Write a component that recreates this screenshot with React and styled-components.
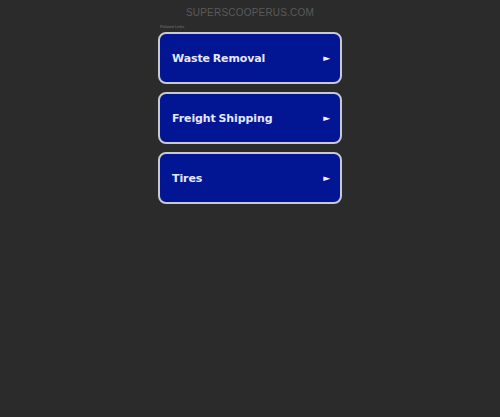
import React from 'react';
import styled, { createGlobalStyle } from 'styled-components';

const GlobalStyle = createGlobalStyle`
  html, body {
    margin: 0;
    padding: 0;
    background: #2b2b2b;
    font-family: "Liberation Sans", Arial, sans-serif;
  }
`;

const Page = styled.div`
  width: 500px;
  height: 417px;
  background: #2b2b2b;
  display: flex;
  flex-direction: column;
  align-items: center;
`;

const Domain = styled.div`
  margin-top: 7px;
  height: 12px;
  font-size: 10px;
  line-height: 12px;
  color: #5a5a5a;
  letter-spacing: 0.2px;
`;

const Links = styled.div`
  width: 184px;
  display: flex;
  flex-direction: column;
  gap: 8px;
`;

const Caption = styled.div`
  font-size: 4px;
  line-height: 5px;
  height: 5px;
  margin: 5px 0 -5px 2px;
  color: #777;
`;

const LinkButton = styled.a`
  box-sizing: border-box;
  height: 52px;
  display: flex;
  align-items: center;
  justify-content: space-between;
  padding: 0 10px 0 12px;
  background: #021592;
  border: 2px solid #c9c9cf;
  border-radius: 8px;
  color: #e4e8ff;
  font-family: "DejaVu Sans", Verdana, sans-serif;
  font-size: 11px;
  font-weight: bold;
  letter-spacing: -0.1px;
  word-spacing: -1px;
  text-decoration: none;
`;

const Arrow = styled.span`
  font-size: 9px;
  color: #f0f0ff;
`;

const items = ['Waste Removal', 'Freight Shipping', 'Tires'];

export default function App() {
  return (
    <>
      <GlobalStyle />
      <Page>
        <Domain>SUPERSCOOPERUS.COM</Domain>
        <Links>
          <Caption>Related Links</Caption>
          {items.map((t) => (
            <LinkButton key={t} href="#">
              {t}
              <Arrow>►</Arrow>
            </LinkButton>
          ))}
        </Links>
      </Page>
    </>
  );
}
